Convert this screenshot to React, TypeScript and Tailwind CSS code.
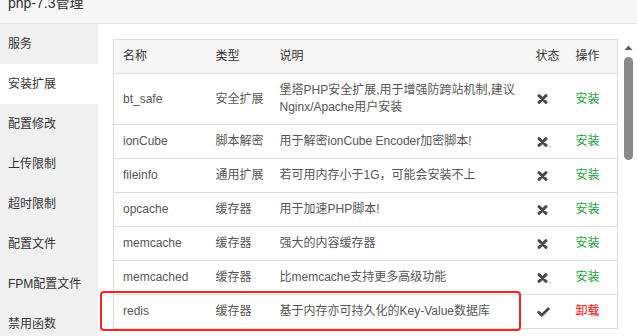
import React from "react";

type Ext = {
  name: string;
  type: string;
  desc: React.ReactNode;
  installed?: boolean;
};

const menu = ["服务", "安装扩展", "配置修改", "上传限制", "超时限制", "配置文件", "FPM配置文件", "禁用函数"];

const rows: Ext[] = [
  {
    name: "bt_safe",
    type: "安全扩展",
    desc: (
      <>
        堡塔PHP安全扩展,用于增强防跨站机制,建议
        <br />
        Nginx/Apache用户安装
      </>
    ),
  },
  { name: "ionCube", type: "脚本解密", desc: "用于解密ionCube Encoder加密脚本!" },
  { name: "fileinfo", type: "通用扩展", desc: "若可用内存小于1G，可能会安装不上" },
  { name: "opcache", type: "缓存器", desc: "用于加速PHP脚本!" },
  { name: "memcache", type: "缓存器", desc: "强大的内容缓存器" },
  { name: "memcached", type: "缓存器", desc: "比memcache支持更多高级功能" },
  { name: "redis", type: "缓存器", desc: "基于内存亦可持久化的Key-Value数据库", installed: true },
];

function CrossIcon() {
  return (
    <svg width="11" height="10" viewBox="0 0 11 10" className="block">
      <path d="M2 1.7 L9 8.3 M9 1.7 L2 8.3" stroke="#4a4a4a" strokeWidth="3" strokeLinecap="round" fill="none" />
    </svg>
  );
}

function CheckIcon() {
  return (
    <svg width="13" height="10" viewBox="0 0 13 10" className="block">
      <path d="M1.7 5.3 L4.7 8.2 L11.4 1.7" stroke="#4a4a4a" strokeWidth="2.8" strokeLinecap="round" strokeLinejoin="round" fill="none" />
    </svg>
  );
}

export default function App() {
  return (
    <div
      className="relative w-[637px] h-[336px] overflow-hidden bg-white text-[12px]"
      style={{ fontFamily: '"Liberation Sans", "Noto Sans CJK SC", sans-serif' }}
    >
      <div className="h-[24px] bg-[#f6f6f6] border-b border-[#e4e4e4] px-2 overflow-hidden">
        <div className="-mt-[7px] text-[14px] leading-[20px] text-[#333]">php-7.3管理</div>
      </div>
      <div className="flex h-[312px]">
        <div className="w-[98px] shrink-0 bg-[#f0f0f0]">
          {menu.map((m, i) => (
            <div
              key={m}
              className={`h-[40px] flex items-center pl-2 text-[#333] ${i === 1 ? "bg-white" : ""}`}
            >
              {m}
            </div>
          ))}
        </div>
        <div className="flex flex-1">
          <div className="pl-[15px] pt-[15px]">
            <table className="w-[504px] table-fixed border-collapse border border-[#ddd]">
              <colgroup>
                <col className="w-[92px]" />
                <col className="w-[64px]" />
                <col className="w-[257px]" />
                <col className="w-[40px]" />
                <col className="w-[51px]" />
              </colgroup>
              <thead>
                <tr className="bg-[#f6f6f6] text-[#333] text-left">
                  <th className="font-normal h-[34px] pl-[9px] py-0 leading-[17px] border-b border-[#ddd]">名称</th>
                  <th className="font-normal pl-[10px] leading-[17px] border-b border-[#ddd]">类型</th>
                  <th className="font-normal pl-[10px] leading-[17px] border-b border-[#ddd]">说明</th>
                  <th className="font-normal pl-[9px] leading-[17px] border-b border-[#ddd]">状态</th>
                  <th className="font-normal pl-[9px] leading-[17px] border-b border-[#ddd]">操作</th>
                </tr>
              </thead>
              <tbody className="text-[#555]">
                {rows.map((r) => (
                  <tr key={r.name} className="border-b border-[#ddd]">
                    <td className="pl-[9px] py-[8px] leading-[17px] align-middle">{r.name}</td>
                    <td className="pl-[10px] py-[8px] leading-[17px] align-middle">{r.type}</td>
                    <td className="pl-[10px] pr-1 py-[8px] leading-[17px] align-middle whitespace-nowrap">{r.desc}</td>
                    <td className="pl-[10px] py-[8px] align-middle">
                      {r.installed ? <CheckIcon /> : <CrossIcon />}
                    </td>
                    <td className="pl-[9px] py-[8px] leading-[17px] align-middle">
                      {r.installed ? (
                        <span className="text-[#ff0000]">卸载</span>
                      ) : (
                        <span className="text-[#20a53a]">安装</span>
                      )}
                    </td>
                  </tr>
                ))}
              </tbody>
            </table>
          </div>
          <div className="w-[20px] flex flex-col items-center pt-[21px] pl-[1px]">
            <svg width="9" height="5" viewBox="0 0 9 5" className="block">
              <path d="M0.5 5 L4.5 0.5 L8.5 5 Z" fill="#606060" />
            </svg>
            <div className="mt-[7px] w-[9px] h-[103px] rounded-full bg-[#8a8a8a]" />
          </div>
        </div>
      </div>
      <div className="absolute left-[100px] top-[291px] w-[421px] h-[40px] border-[2.5px] border-[#ff1f1f] rounded-[4px]" />
    </div>
  );
}
